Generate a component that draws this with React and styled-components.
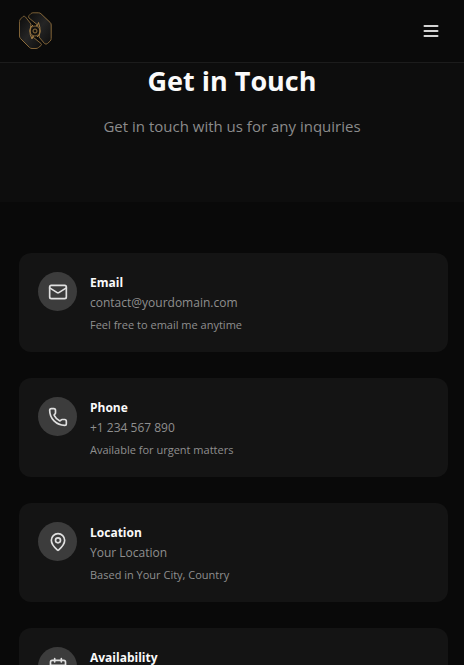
import React from "react";
import styled, { createGlobalStyle } from "styled-components";
import { Mail, Phone, MapPin, Calendar } from "lucide-react";

const GlobalStyle = createGlobalStyle`
  * { box-sizing: border-box; }
  html { scrollbar-width: none; }
  body {
    margin: 0;
    background: #090909;
    color: #fafafa;
    font-family: "Segoe UI", "Open Sans", "Noto Sans", sans-serif;
  }
  h1, h2, p { margin: 0; }
`;

const Header = styled.header`
  position: sticky;
  top: 0;
  z-index: 1;
  display: flex;
  align-items: center;
  justify-content: space-between;
  height: 63px;
  padding: 0 20px 0 16px;
  background: #0a0a0a;
  border-bottom: 1px solid #1c1c1c;
`;

const LogoLink = styled.a`
  display: flex;
`;

const MenuButton = styled.button`
  display: flex;
  padding: 3px;
  border: 0;
  background: none;
  color: #d4d4d4;
  cursor: pointer;
`;

const Hero = styled.section`
  display: flex;
  flex-direction: column;
  align-items: center;
  gap: 15px;
  padding: 0 16px 64px;
  background: #0d0d0d;
  text-align: center;
`;

const Title = styled.h1`
  font-size: 27px;
  line-height: 36px;
  font-weight: 700;
`;

const Subtitle = styled.p`
  font-size: 15px;
  line-height: 24px;
  color: #8b8b8b;
`;

const CardList = styled.section`
  display: grid;
  gap: 26px;
  padding: 51px 16px 51px 19px;
`;

const Card = styled.article`
  display: flex;
  align-items: flex-start;
  gap: 13px;
  min-height: 99px;
  padding: 19px;
  border-radius: 12px;
  background: #141414;
`;

const IconDisc = styled.div`
  display: flex;
  flex: none;
  align-items: center;
  justify-content: center;
  width: 39px;
  height: 39px;
  border-radius: 50%;
  background: #3c3c3c;
  color: #e0e0e0;
`;

const CardTitle = styled.h2`
  font-size: 12px;
  line-height: 21px;
  font-weight: 700;
`;

const CardValue = styled.p`
  font-size: 12px;
  line-height: 19px;
  color: #8f8f8f;
`;

const CardNote = styled.p`
  padding-top: 5px;
  font-size: 11px;
  line-height: 16px;
  color: #8f8f8f;
`;

const contacts = [
  { icon: Mail, title: "Email", value: "contact@yourdomain.com", note: "Feel free to email me anytime" },
  { icon: Phone, title: "Phone", value: "+1 234 567 890", note: "Available for urgent matters" },
  { icon: MapPin, title: "Location", value: "Your Location", note: "Based in Your City, Country" },
  { icon: Calendar, title: "Availability" },
];

function MenuIcon() {
  return (
    <svg width="20" height="20" viewBox="0 0 20 20" stroke="currentColor" strokeWidth="2" strokeLinecap="round" aria-hidden="true">
      <path d="M3.500 5H16.500M3.500 10H16.500M3.500 15H16.500" />
    </svg>
  );
}

function Logo() {
  return (
    <svg width="38" height="38" viewBox="0 0 38 38" fill="none" aria-hidden="true">
      <defs>
        <linearGradient id="gold" x1="0" y1="0" x2="1" y2="1">
          <stop offset="0" stopColor="#6e5630" />
          <stop offset="0.5" stopColor="#8f6e3c" />
          <stop offset="1" stopColor="#7b5e34" />
        </linearGradient>
        <linearGradient id="plate" x1="0" y1="0" x2="1" y2="1">
          <stop offset="0" stopColor="#0c0c0c" />
          <stop offset="0.5" stopColor="#252525" />
          <stop offset="1" stopColor="#0e0e0e" />
        </linearGradient>
      </defs>
      <g fill="url(#plate)" stroke="url(#gold)" strokeLinejoin="round">
        <path d="M7 4.500L4.500 7Q3.500 8 3.500 9.500V24Q3.500 25.500 4.500 26.500L13.500 35.500Q14.500 36.500 16 36.500H20Q21.500 36.500 22.500 35.500L25 33.500Q26 32.500 25 31.500L17 25L14 19L15 12L9.500 5Q8 3.500 7 4.500Z" />
        <path d="M13 3.500L15 1.500Q16 0.800 17 0.800H22.500Q24 0.800 25 1.800L34.200 10.500Q35.200 11.500 35.200 13V26.500Q35.200 28 34.200 29L31.500 31.500Q30 32.800 28.500 31.500L23 25L24 19L21 12.500L13 6Q12 5 13 3.500Z" />
      </g>
      <circle cx="19" cy="19" r="5" fill="#12110f" stroke="#7d6036" />
      <circle cx="19" cy="19" r="2" stroke="#8f6e3c" />
      <path
        d="M17 13Q13.500 15 14 19Q13.500 22 16 27Q16.500 24 18 24M21 25Q24.500 23 24 19Q24.500 16 22.500 10.500Q22 13.500 20 14"
        stroke="#a27d45"
        strokeLinejoin="round"
      />
    </svg>
  );
}

export default function App() {
  return (
    <>
      <GlobalStyle />
      <Header>
        <LogoLink href="#" aria-label="Home">
          <Logo />
        </LogoLink>
        <MenuButton type="button" aria-label="Open menu">
          <MenuIcon />
        </MenuButton>
      </Header>
      <main>
        <Hero>
          <Title>Get in Touch</Title>
          <Subtitle>Get in touch with us for any inquiries</Subtitle>
        </Hero>
        <CardList aria-label="Contact details">
          {contacts.map(({ icon: Icon, title, value, note }) => (
            <Card key={title}>
              <IconDisc>
                <Icon size={20} strokeWidth={2} />
              </IconDisc>
              <div>
                <CardTitle>{title}</CardTitle>
                {value && <CardValue>{value}</CardValue>}
                {note && <CardNote>{note}</CardNote>}
              </div>
            </Card>
          ))}
        </CardList>
      </main>
    </>
  );
}
